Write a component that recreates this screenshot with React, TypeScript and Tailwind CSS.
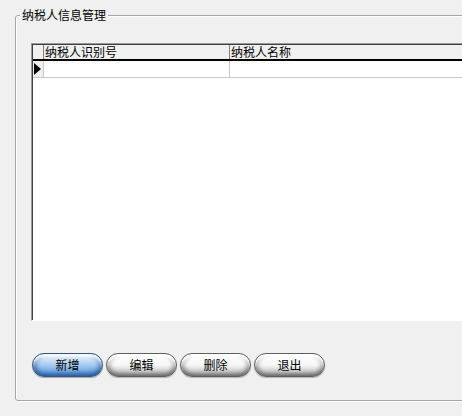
import React from "react";

const font = { fontFamily: '"Noto Sans CJK SC", "DejaVu Sans", sans-serif' };

const buttons = [
  { label: "新增", primary: true },
  { label: "编辑", primary: false },
  { label: "删除", primary: false },
  { label: "退出", primary: false },
];

function PillButton({ label, primary }: { label: string; primary: boolean }) {
  return (
    <button
      className={
        primary
          ? "h-[24px] w-[71px] rounded-full border-[1.5px] border-[#34557c] bg-linear-to-b from-[#f4f9fe] via-[#a6cbf0] to-[#4f8fdb] text-[12px] leading-none text-black shadow-[inset_0_3px_2px_rgba(255,255,255,0.85),inset_0_-3px_4px_rgba(20,60,120,0.45),inset_4px_0_4px_rgba(20,60,120,0.3),inset_-4px_0_4px_rgba(20,60,120,0.3),0_1px_1px_rgba(0,0,0,0.3)]"
          : "h-[24px] w-[71px] rounded-full border-[1.5px] border-[#5f5f5f] bg-linear-to-b from-white via-[#f7f7f7] to-[#b4b4b4] text-[12px] leading-none text-black shadow-[inset_0_3px_2px_rgba(255,255,255,1),inset_0_-3px_4px_rgba(0,0,0,0.3),inset_4px_0_4px_rgba(0,0,0,0.18),inset_-4px_0_4px_rgba(0,0,0,0.18),0_1px_1px_rgba(0,0,0,0.25)]"
      }
      style={font}
    >
      {label}
    </button>
  );
}

export default function App() {
  return (
    <div className="w-[462px] h-[416px] overflow-hidden bg-[#f0f0f0] pl-[15px] pt-[15px]" style={font}>
      <div className="relative h-[386px] w-[470px] rounded-[3px] border border-[#a6a6a6] shadow-[1px_1px_0_#ffffff,inset_1px_1px_0_#ffffff]">
        <span className="absolute left-[4px] top-[-8px] bg-[#f0f0f0] px-[2px] text-[12px] leading-[14px] text-black">
          纳税人信息管理
        </span>

        {/* grid */}
        <div className="ml-[15px] mt-[27px] h-[278px] border-l border-t border-[#9a9a9a] border-b border-b-white">
          <div className="flex h-full flex-col border-l border-t border-[#404040] bg-white">
            <div className="flex h-[16px] border-b-2 border-black bg-[#f0f0f0] text-[12px] leading-[14px]">
              <div className="w-[11px] border-r border-[#808080]" />
              <div className="w-[186px] border-r border-[#808080] pl-[1px]">纳税人识别号</div>
              <div className="flex-1 pl-[1px]">纳税人名称</div>
            </div>
            <div className="flex h-[17px] border-b border-[#c8c8c8]">
              <div className="flex w-[11px] items-center justify-start border-r border-[#c8c8c8] bg-[#f0f0f0] pl-[1px]">
                <svg width="7" height="12" viewBox="0 0 7 12">
                  <path d="M0 0 L7 6 L0 12 Z" fill="#000" />
                </svg>
              </div>
              <div className="w-[186px] border-r border-[#c8c8c8]" />
              <div className="flex-1" />
            </div>
            <div className="flex-1 bg-white" />
          </div>
        </div>

        {/* buttons */}
        <div className="ml-[16px] mt-[32px] flex gap-[3px]">
          {buttons.map((b) => (
            <PillButton key={b.label} label={b.label} primary={b.primary} />
          ))}
        </div>
      </div>
    </div>
  );
}
